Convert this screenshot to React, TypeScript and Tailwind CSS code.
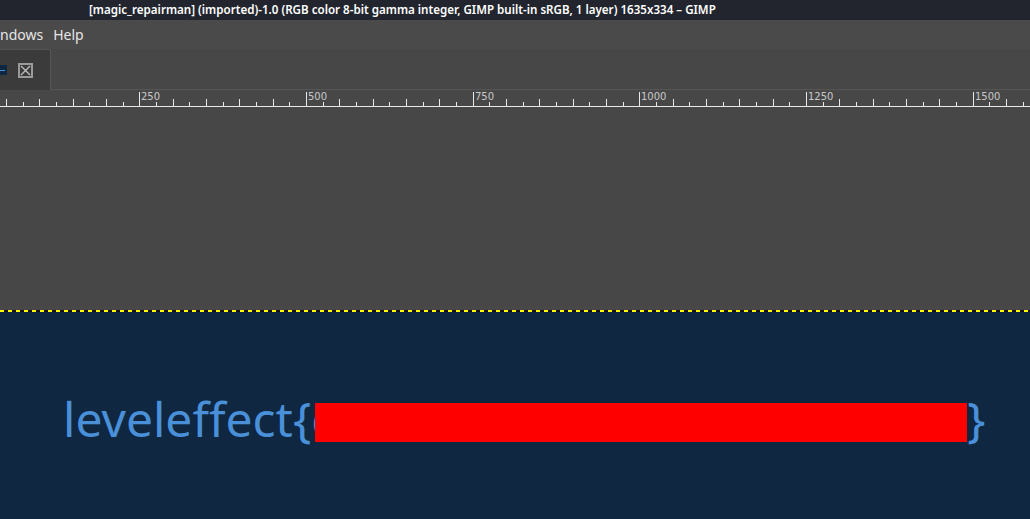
import React from 'react';

const ORIGIN = -27.4;
const STEP = 16.667;

function Ruler() {
    const ticks = [];
    for (let k = 0; k < 64; k++) {
        const x = ORIGIN + STEP * k;
        if (x < 0 || x > 1030) continue;
        const major = k % 10 === 0;
        const medium = k % 2 === 0;
        const y1 = major ? 2 : medium ? 9 : 12;
        ticks.push(
            <line key={k} x1={Math.round(x) + 0.5} x2={Math.round(x) + 0.5} y1={y1} y2={16} stroke="#e8e8e8" strokeWidth="1" />
        );
    }
    const labels = [250, 500, 750, 1000, 1250, 1500];
    return (
        <svg width="1030" height="18" className="block">
            {ticks}
            {labels.map((v) => (
                <text key={v} x={Math.round(ORIGIN + (v / 25) * STEP) + 2} y={10} fontSize="10" fill="#c8c8c8" fontFamily="'DejaVu Sans', sans-serif">
                    {v}
                </text>
            ))}
            <line x1="0" x2="1030" y1="16.5" y2="16.5" stroke="#e8e8e8" strokeWidth="1" />
        </svg>
    );
}

export default function App() {
    return (
        <div className="w-[1030px] h-[519px] overflow-hidden flex flex-col bg-[#474747] font-['Noto_Sans',sans-serif]">
            <div className="h-[20px] bg-[#22252e] text-white text-[11.6px] font-semibold leading-[20px] pl-[89px] whitespace-nowrap">
                [magic_repairman] (imported)-1.0 (RGB color 8-bit gamma integer, GIMP built-in sRGB, 1 layer) 1635x334 – GIMP
            </div>
            <div className="h-[29px] flex items-center gap-[10px] text-[14px] text-[#e6e6e6] bg-[#4a4a4a]">
                <span>ndows</span>
                <span>Help</span>
            </div>
            <div className="h-[41px] flex bg-[#474747] border-b border-[#555]">
                <div className="w-[51px] h-[41px] bg-[#3b3b3b] border-t border-r border-[#555] flex items-center gap-[11px]">
                    <div className="w-[7px] h-[10px] bg-[#0f2741] flex items-center">
                        <div className="w-[5px] h-[1px] bg-[#4a90d9]" />
                    </div>
                    <div className="w-[15px] h-[15px] border-2 border-[#9a9a9a] flex items-center justify-center">
                        <svg width="11" height="11" viewBox="0 0 11 11">
                            <path d="M1 1 L10 10 M10 1 L1 10" stroke="#bdbdbd" strokeWidth="1.4" />
                        </svg>
                    </div>
                </div>
            </div>
            <Ruler />
            <div className="flex-1 bg-[#474747]" />
            <div className="h-[2px] bg-[repeating-linear-gradient(90deg,#ffff00_0px,#ffff00_4px,#111_4px,#111_8px)]" />
            <div className="h-[207px] bg-[#0f2741] flex items-start pl-[63px] pt-[78px]">
                <div className="flex items-center text-[48px] leading-[58px] text-[#4a90d9]">
                    <span>leveleffect{'{'}c</span>
                    <div className="relative w-[652px] h-[39px] bg-[#ff0000] -ml-[19px] mt-[6px]" />
                    <span>{'}'}</span>
                </div>
            </div>
        </div>
    );
}
